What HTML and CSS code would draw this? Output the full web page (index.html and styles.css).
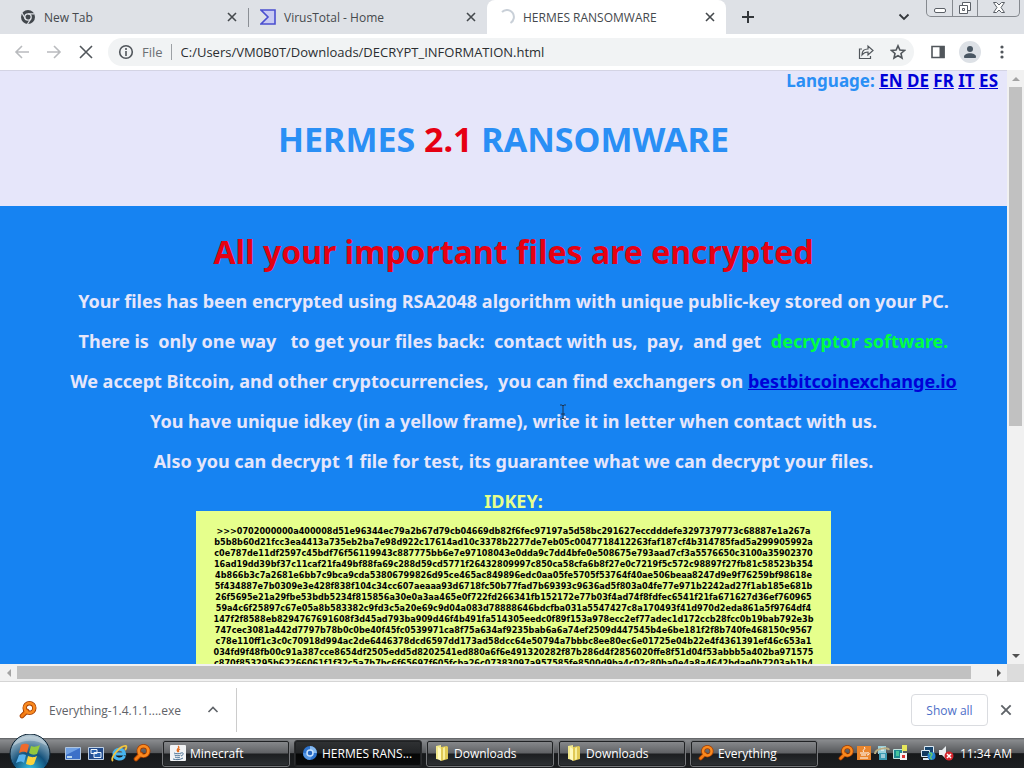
FILE: index.html
```
<!DOCTYPE html>
<html lang="en">
<head>
    <meta charset="UTF-8">
    <meta name="viewport" content="width=device-width, initial-scale=1.0">
    <title>HERMES RANSOMWARE</title>
    <link rel="stylesheet" href="styles.css">
</head>
<body>
    <!-- shared icons -->
    <svg class="sprite" aria-hidden="true">
        <symbol id="close" viewBox="0 0 12 12"><path d="M2 2l8 8M10 2l-8 8" fill="none" stroke="currentColor" stroke-width="1.6"/></symbol>
        <symbol id="magnifier" viewBox="0 0 18 18">
            <path d="M8 10l-5 5" stroke="#a33d00" stroke-width="4.600" stroke-linecap="round"/>
            <circle cx="10.500" cy="7" r="4.800" fill="none" stroke="#a33d00" stroke-width="4.400"/>
            <path d="M8 10l-5 5" stroke="#f47c14" stroke-width="3" stroke-linecap="round"/>
            <circle cx="10.500" cy="7" r="4.800" fill="none" stroke="#f98a20" stroke-width="2.800"/>
        </symbol>
        <symbol id="folder" viewBox="0 0 16 16">
            <path d="M2 1l5-1v15l-5-1z" fill="#f3e98c"/>
            <path d="M7 2l6-1 1 1v12l-7 2z" fill="#e0c955"/>
            <path d="M4 2l3 2v12l-3-2z" fill="#fff9bd"/>
            <path d="M9 3l2-1v12l-2 1z" fill="#f8ef9c"/>
        </symbol>
        <symbol id="cup" viewBox="0 0 16 16">
            <path d="M8 1c3 2-3 3 0 6M10 4c-2 1-2 2-1 3" fill="none" stroke="#e36b1d" stroke-width="1.300"/>
            <path d="M4 8c2 1 6 1 7 0M4.500 10c2 1 5 1 6 0M5 12c2 1 4 1 5 0M11 8c3-1 3 2 0 3M3 14c3 1 7 1 10-1" fill="none" stroke="#4c7396"/>
        </symbol>
    </svg>

    <header class="tabs">
        <div class="tab">
            <svg class="icon16" viewBox="0 0 16 16"><circle cx="8" cy="8" r="7" fill="#42474c"/><circle cx="8" cy="8" r="3.200" fill="none" stroke="#dee1e6" stroke-width="1.300"/><path d="M8 4.800h6.500M5.300 9.600L2 4M10.800 9.600L7.500 15" stroke="#dee1e6" stroke-width="1.200"/></svg>
            <span class="tab-title">New Tab</span>
            <button class="tab-close" aria-label="Close tab"><svg><use href="#close"/></svg></button>
        </div>
        <div class="tab divided">
            <svg class="icon16" viewBox="0 0 16 16"><path d="M1 1h14v14H1l7-7z" fill="#c9cbf3" stroke="#4b4fd0" stroke-width="1.600"/></svg>
            <span class="tab-title">VirusTotal - Home</span>
            <button class="tab-close" aria-label="Close tab"><svg><use href="#close"/></svg></button>
        </div>
        <div class="tab active">
            <svg class="icon16" viewBox="0 0 16 16"><path d="M3 3a7 7 0 1 1 8.500 11" fill="none" stroke="#c9d0d8" stroke-width="2"/></svg>
            <span class="tab-title">HERMES RANSOMWARE</span>
            <button class="tab-close" aria-label="Close tab"><svg><use href="#close"/></svg></button>
        </div>
        <button class="new-tab" aria-label="New tab"><svg viewBox="0 0 14 14"><path d="M7 1v12M1 7h12" stroke="#33373b" stroke-width="2"/></svg></button>
        <button class="tab-search" aria-label="Search tabs"><svg viewBox="0 0 12 12"><path d="M1.500 3.500L6 8l4.500-4.500" fill="none" stroke="#33373b" stroke-width="1.800"/></svg></button>
        <div class="window-buttons">
            <button aria-label="Minimize"><svg viewBox="0 0 16 16"><rect x="2.500" y="8.500" width="11" height="4" rx="1.500" fill="#fff" stroke="#5b6067"/></svg></button>
            <button aria-label="Restore"><svg viewBox="0 0 16 16"><path d="M5.500 2.500h8v8h-8z" fill="#fff" stroke="#5b6067"/><path d="M2.500 5.500h8v8h-8z" fill="#fff" stroke="#5b6067"/><path d="M5.500 8.500h2v2h-2z" fill="none" stroke="#5b6067"/></svg></button>
            <button class="wide" aria-label="Close"><svg viewBox="0 0 16 16"><path d="M2.500 2.500h3L8 5l2.500-2.500h3L10 7.500l3.500 5h-3L8 10l-2.500 2.500h-3L6 7.500z" fill="#fff" stroke="#5b6067"/></svg></button>
        </div>
    </header>

    <nav class="toolbar">
        <button class="faded" aria-label="Back"><svg viewBox="0 0 16 16"><path d="M15 8H2M8 2L2 8l6 6"/></svg></button>
        <button class="faded" aria-label="Forward"><svg viewBox="0 0 16 16"><path d="M1 8h13M8 2l6 6-6 6"/></svg></button>
        <button aria-label="Stop"><svg viewBox="0 0 16 16"><path d="M2 2l12 12M14 2L2 14"/></svg></button>
        <div class="address">
            <svg viewBox="0 0 16 16"><circle cx="8" cy="8" r="6.300"/><path d="M8 7v5M8 4v2"/></svg>
            <label for="url">File</label>
            <input type="text" id="url" value="C:/Users/VM0B0T/Downloads/DECRYPT_INFORMATION.html">
            <button aria-label="Share"><svg viewBox="0 0 16 16"><path class="thin" d="M4 5H1.500v9.500h11V12M4 11c0-4 2-6 6-6V2l5 4.500-5 4.500V8C7 8 5.500 9 4 11z"/></svg></button>
            <button aria-label="Bookmark"><svg viewBox="0 0 16 16"><path d="M8 1.800l1.900 4.200 4.500.5-3.400 3 1 4.500-4-2.400-4 2.400 1-4.500-3.400-3 4.500-.5z"/></svg></button>
        </div>
        <button aria-label="Side panel"><svg viewBox="0 0 16 16"><path d="M2 2.500h12v11H2z"/><path d="M9.500 2h5v12h-5z" fill="#51565b" stroke="none"/></svg></button>
        <button class="profile" aria-label="Profile"><svg viewBox="0 0 16 16"><circle cx="8" cy="5" r="3" fill="#4a5763" stroke="none"/><path d="M2 13c0-5 12-5 12 0v1H2z" fill="#4a5763" stroke="none"/></svg></button>
        <button aria-label="Menu"><svg viewBox="0 0 16 16"><g fill="#51565b" stroke="none"><circle cx="8" cy="3" r="1.600"/><circle cx="8" cy="8" r="1.600"/><circle cx="8" cy="13" r="1.600"/></g></svg></button>
    </nav>

    <div class="viewport">
        <main class="page">
            <div class="top">
                <div class="language">Language: <a href="#">EN</a> <a href="#">DE</a> <a href="#">FR</a> <a href="#">IT</a> <a href="#">ES</a></div>
                <h1>HERMES <span class="red">2.1</span> RANSOMWARE</h1>
            </div>
            <div class="note">
                <h2>All your important files are encrypted</h2>
                <p>Your files has been encrypted using RSA2048 algorithm with unique public-key stored on your PC.</p>
                <p>There is&nbsp; only one way&nbsp;&nbsp; to get your files back:&nbsp; contact with us,&nbsp; pay,&nbsp; and get&nbsp; <span class="green">decryptor software.</span></p>
                <p>We accept Bitcoin, and other cryptocurrencies,&nbsp; you can find exchangers on <a href="#">bestbitcoinexchange.io</a></p>
                <p>You have unique idkey (in a yellow frame), write it in letter when contact with us.</p>
                <p>Also you can decrypt 1 file for test, its guarantee what we can decrypt your files.</p>
                <div class="idkey-label">IDKEY:</div>
                <div class="idkey">&gt;&gt;&gt;0702000000a400008d51e96344ec79a2b67d79cb04669db82f6fec97197a5d58bc291627eccdddefe3297379773c68887e1a267a<br>
b5b8b60d21fcc3ea4413a735eb2ba7e98d922c17614ad10c3378b2277de7eb05c0047718412263faf187cf4b314785fad5a299905992a<br>
c0e787de11df2597c45bdf76f56119943c887775bb6e7e97108043e0dda9c7dd4bfe0e508675e793aad7cf3a5576650c3100a35902370<br>
16ad19dd39bf37c11caf21fa49bf88fa69c288d59cd5771f26432809997c850ca58cfa6b8f27e0c7219f5c572c98897f27fb81c58523b354<br>
4b866b3c7a2681e6bb7c9bca9cda53806799826d95ce465ac849896edc0aa05fe5705f53764f40ae506beaa8247d9e9f76259bf98618e<br>
5f434887e7b0309e3e428f838f104c34cc607aeaaa93d6718fc50b77fad7b69393c9636ad5f803a04fe77e971b2242ad27f1ab185e681b<br>
26f5695e21a29fbe53bdb5234f815856a30e0a3aa465e0f722fd266341fb152172e77b03f4ad74f8fdfec6541f21fa671627d36ef760965<br>
59a4c6f25897c67e05a8b583382c9fd3c5a20e69c9d04a083d78888646bdcfba031a5547427c8a170493f41d970d2eda861a5f9764df4<br>
147f2f8588eb8294767691608f3d45ad793ba909d46f4b491fa514305eedc0f89f153a978ecc2ef77adec1d172ccb28fcc0b19bab792e3b<br>
747cec3081a442d7797b78b0c0be40f45fc0539971ca8f75a634af9235bab6a6a74ef2509d447545b4e6be181f2f8b740fe468150c9567<br>
c78e110ff1c3c0c70918d994ac2de6446378dcd6597dd173ad58dcc64e50794a7bbbc8ee80ec6e01725e04b22e4f4361391ef46c653a1<br>
034fd9f48fb00c91a387cce8654df2505edd5d8202541ed880a6f6e491320282f87b286d4f2856020ffe8f51d04f53abbb5a402ba971575<br>
c870f853295b62266061f1f32c5a7b7bc6f65697f605fcba26c07383097a957585fe8500d9ba4c02c80ba0e4a8a4642bdae0b7203ab1b4</div>
            </div>
        </main>
        <div class="scroll-y"><span class="arrow up"></span><span class="thumb"></span><span class="arrow down"></span></div>
        <div class="scroll-x"><span class="arrow left"></span><span class="thumb"></span><span class="arrow right"></span></div>
        <div class="corner"></div>
        <svg class="cursor" viewBox="0 0 8 16"><path d="M1 1h2l1 1 1-1h2M4 2v12M1 15h2l1-1 1 1h2M2 10h4" fill="none" stroke="#1c3452"/></svg>
    </div>

    <section class="downloads">
        <div class="download">
            <svg class="icon18"><use href="#magnifier"/></svg>
            <span>Everything-1.4.1.1....exe</span>
            <button aria-label="Download options"><svg viewBox="0 0 12 12"><path d="M1.500 8L6 3.500 10.500 8" fill="none" stroke="#5f6368" stroke-width="1.600"/></svg></button>
        </div>
        <button class="show-all">Show all</button>
        <button class="close-bar" aria-label="Close downloads"><svg><use href="#close"/></svg></button>
    </section>

    <footer class="taskbar">
        <button class="start" aria-label="Start">
            <svg viewBox="0 0 42 34">
                <defs><radialGradient id="orb" cx="50%" cy="90%" r="85%"><stop offset="0" stop-color="#35c3e8"/><stop offset=".5" stop-color="#14527c"/><stop offset="1" stop-color="#a9bfcc"/></radialGradient></defs>
                <circle cx="21" cy="20" r="20" fill="url(#orb)" stroke="#0b2233"/>
                <path d="M12 11c4-2 6-1 8 0l-2 8c-3-2-5-1-8 0z" fill="#ee6a2c"/>
                <path d="M22 12c3 1 5 1 9-1l-3 9c-3 1-5 1-8-1z" fill="#93c83e"/>
                <path d="M10 21c3-1 5-1 7 0l-2 8c-2-2-5-2-8 0z" fill="#5ab2ec"/>
                <path d="M19 22c3 1 5 2 9 0l-3 8c-3 2-5 1-8 0z" fill="#fcd43c"/>
                <path d="M4 12C9-1 33-1 38 12 27 5 15 5 4 12z" fill="#fff" opacity=".3"/>
            </svg>
        </button>
        <div class="quick">
            <a href="#" aria-label="Show desktop"><svg class="icon18" viewBox="0 0 18 18"><path d="M1.500 3.500h15v12h-15z" fill="#3c70c8" stroke="#afc5df"/><path d="M2 4h14L2 11z" fill="#6fa0e4"/><path d="M3 12h5v2H3z" fill="#b8d8ee"/></svg></a>
            <a href="#" aria-label="Switch windows"><svg class="icon18" viewBox="0 0 18 18"><path d="M1.500 3.500h15v12h-15z" fill="#224b8b" stroke="#bdcfe4"/><path d="M4 5.500h6v4H4zM7 8.500h7v5H7z" fill="#2b62ad" stroke="#e8f1fb"/></svg></a>
            <a href="#" aria-label="Internet Explorer"><svg class="icon18" viewBox="0 0 18 18"><path d="M14.500 12c-2 4.500-10.500 4-10.500-2s9.500-6.500 10.500 0H5" fill="none" stroke="#48b5ef" stroke-width="3"/><path d="M3 17C-1 14 11 1 16 2c1 1 0 3-1 4" fill="none" stroke="#f2c53d" stroke-width="1.800"/></svg></a>
            <a href="#" aria-label="Everything"><svg class="icon18"><use href="#magnifier"/></svg></a>
        </div>
        <div class="tasks">
            <button><svg class="icon16" viewBox="0 0 16 16"><rect width="16" height="16" rx="1" fill="#f1f3f5"/><use href="#cup"/></svg><span>Minecraft</span></button>
            <button class="current"><svg class="icon16" viewBox="0 0 16 16"><circle cx="8" cy="8" r="7" fill="#2e74cf"/><path d="M8 1a7 7 0 0 1 7 7H8z" fill="#85b9f1"/><path d="M1 8a7 7 0 0 0 7 7l3-6z" fill="#5596e3"/><circle cx="8" cy="8" r="3" fill="#2364c0" stroke="#c6e0fb" stroke-width="1.500"/></svg><span>HERMES RANS...</span></button>
            <button><svg class="icon16"><use href="#folder"/></svg><span>Downloads</span></button>
            <button><svg class="icon16"><use href="#folder"/></svg><span>Downloads</span></button>
            <button><svg class="icon16"><use href="#magnifier"/></svg><span>Everything</span></button>
        </div>
        <div class="tray">
            <svg class="icon16"><use href="#magnifier"/></svg>
            <svg class="icon16" viewBox="0 0 16 16"><rect x="1" y="1" width="14" height="14" fill="#e9852d"/><path d="M8 2c3 2-3 3 0 5M4 8h7M5 10h5M11 8c3-1 3 2 0 2M4 13h8" fill="none" stroke="#fff"/></svg>
            <svg class="icon16" viewBox="0 0 16 16"><path d="M4 1h8v8H4z" fill="#9ad2de"/><path d="M5 8h8v7H5z" fill="#3d9bb4"/><path d="M7 3h3M7 5h3M7 10h4M7 12h4" stroke="#fff"/><path d="M1 9c0-6 13-7 14-4" fill="none" stroke="#b9ad83" stroke-width="2"/></svg>
            <svg class="icon16" viewBox="0 0 16 16"><path d="M1.500 4.500h9v9h-9z" fill="#1d8a90" stroke="#bfe3df"/><path d="M10 0h5v6h-5z" fill="#e6e65b"/><path d="M8 8h7v7H8z" fill="#f3f3f3"/><path d="M10 10h3v3h-3z" fill="#d33"/><path d="M4 6h3v5H4z" fill="#45c59d"/></svg>
            <svg class="icon16 network" viewBox="0 0 16 16"><path d="M4.500 1.500h9v7h-9z" fill="#17456e" stroke="#dceaf5"/><path d="M1.500 5.500h8v6h-8z" fill="#123a60" stroke="#dceaf5"/><path d="M3 14h6" stroke="#dceaf5" stroke-width="2"/><circle cx="11.500" cy="11" r="4" fill="#2483d2"/><path d="M9 9c2-2 4 0 2 2s1 3 1 3" fill="none" stroke="#62c66a" stroke-width="1.500"/></svg>
            <svg class="icon16" viewBox="0 0 16 16"><path d="M1 5h3l4-4v13l-4-4H1z" fill="#e9edf0"/><circle cx="11" cy="11" r="4.500" fill="#d4242c"/><path d="M9 9l4 4M13 9l-4 4" stroke="#fff" stroke-width="1.500"/></svg>
            <time>11:34 AM</time>
        </div>
    </footer>
</body>
</html>
```

FILE: styles.css
```
* {
    box-sizing: border-box;
}
body {
    margin: 0;
    height: 100vh;
    display: flex;
    flex-direction: column;
    overflow: hidden;
    font-family: "Open Sans", "Noto Sans", sans-serif;
    font-size: 12px;
    background: #fff;
}
button {
    display: flex;
    align-items: center;
    justify-content: center;
    padding: 0;
    border: 0;
    background: none;
    font: inherit;
    color: inherit;
}
svg {
    display: block;
    flex: none;
}
.sprite {
    position: absolute;
    width: 0;
    height: 0;
}
.icon16 {
    width: 16px;
    height: 16px;
}
.icon18 {
    width: 18px;
    height: 18px;
}

/* tab strip */
.tabs {
    display: flex;
    flex: none;
    height: 34px;
    background: #dee1e6;
    color: #45494d;
}
.tab {
    display: flex;
    align-items: center;
    flex: 0 1 239px;
    gap: 8px;
    padding: 0 10px 0 12px;
}
.tab:first-child {
    flex-basis: 248px;
    padding-left: 20px;
}
.tab-title {
    flex: 1;
    white-space: nowrap;
}
.tab-close svg {
    width: 12px;
    height: 12px;
}
.divided {
    background: linear-gradient(#8b8f95, #8b8f95) 0 8px / 1px 19px no-repeat;
}
.active {
    background: #fff;
    border-radius: 8px 8px 0 0;
}
.new-tab {
    width: 44px;
}
.new-tab svg {
    width: 14px;
    height: 14px;
}
.tab-search {
    margin-left: auto;
    width: 44px;
}
.tab-search svg {
    width: 12px;
    height: 12px;
}
.window-buttons {
    display: flex;
    height: 17px;
    margin-right: 4px;
    border: 1px solid #85898f;
    border-top: 0;
    border-radius: 0 0 5px 5px;
}
.window-buttons button {
    width: 25px;
}
.window-buttons button + button {
    border-left: 1px solid #85898f;
}
.window-buttons .wide {
    width: 42px;
}
.window-buttons svg {
    width: 16px;
    height: 16px;
}

/* address row */
.toolbar {
    display: flex;
    flex: none;
    align-items: center;
    height: 36px;
    padding: 0 6px;
    background: #fff;
}
.toolbar button {
    width: 32px;
    height: 28px;
}
.toolbar svg {
    width: 16px;
    height: 16px;
    fill: none;
    stroke: #51565b;
    stroke-width: 1.6;
}
.toolbar .thin {
    stroke-width: 1.2;
}
.toolbar .faded svg {
    stroke: #b9bbbe;
}
.address {
    display: flex;
    flex: 1;
    align-items: center;
    height: 28px;
    margin: 0 8px 0 6px;
    padding: 0 0 0 10px;
    border-radius: 14px;
    background: #f1f3f4;
}
.address label {
    margin-left: 8px;
    padding-right: 8px;
    border-right: 1px solid #9da1a5;
    font-size: 13px;
    line-height: 16px;
    color: #6b6f73;
}
.address input {
    flex: 1;
    min-width: 0;
    padding: 0 0 0 9px;
    border: 0;
    background: none;
    font: inherit;
    font-size: 13px;
    color: #2b2e31;
}
.toolbar .profile svg {
    width: 22px;
    height: 22px;
    padding: 3px;
    border-radius: 50%;
    background: #dde1e6;
}

/* page and its scrollbars */
.viewport {
    position: relative;
    display: grid;
    flex: 1;
    min-height: 0;
    grid-template: minmax(0, 1fr) 17px / minmax(0, 1fr) 17px;
    border-bottom: 1px solid #d5d5d5;
}
.page {
    display: flex;
    flex-direction: column;
    overflow: hidden;
    background: #e6e6fa;
    font-family: "Noto Sans", sans-serif;
    font-size: 18px;
    font-weight: bold;
    line-height: 20px;
    text-align: center;
}
.page a {
    color: #0000d8;
}
.top {
    flex: none;
    height: 136px;
    border-top: 1px solid #d4d4e4;
    color: #2a8ff5;
}
.language {
    padding-right: 9px;
    font-size: 17px;
    text-align: right;
}
h1, h2 {
    margin: 0;
    font-size: 32px;
    line-height: 40px;
}
h1 {
    margin-top: 28px;
    font-size: 34px;
}
.red, h2 {
    color: #e60012;
}
.green {
    color: #00ff40;
}
.note {
    flex: none;
    margin-right: -20px;
    padding-top: 26px;
    background: #1683f2;
    color: #e6e6fa;
}
.note p {
    margin: 0 0 20px;
    white-space: nowrap;
}
.note h2 {
    margin-bottom: 19px;
}
.idkey-label {
    color: #e6ff8c;
}
.idkey {
    width: 635px;
    margin: 0 auto;
    padding: 15px 16px;
    background: #e6ff8c;
    color: #000;
    font-family: "DejaVu Sans Condensed", "DejaVu Sans", sans-serif;
    font-size: 9px;
    line-height: 11px;
}
.scroll-y, .scroll-x {
    display: flex;
    align-items: center;
    background: #f1f1f1;
}
.scroll-y {
    flex-direction: column;
}
.scroll-y .thumb {
    width: 13px;
    height: 57%;
    background: #c1c1c1;
}
.scroll-y .down {
    margin-top: auto;
}
.scroll-x .thumb {
    flex: 0 1 954px;
    height: 13px;
    background: #c1c1c1;
}
.scroll-x .right {
    margin-left: auto;
}
.arrow {
    display: flex;
    flex: none;
    align-items: center;
    justify-content: center;
    width: 17px;
    height: 17px;
}
.arrow::before {
    content: "";
    border: 4px solid transparent;
}
.up::before {
    border-top-width: 0;
    border-bottom-color: #a3a3a3;
}
.down::before {
    border-bottom-width: 0;
    border-top-color: #505050;
}
.left::before {
    border-left-width: 0;
    border-right-color: #a3a3a3;
}
.right::before {
    border-right-width: 0;
    border-left-color: #505050;
}
.corner {
    background: #dcdcdc;
}
.cursor {
    position: absolute;
    left: 559px;
    top: 334px;
    width: 8px;
    height: 16px;
}

/* download shelf */
.downloads {
    display: flex;
    flex: none;
    align-items: center;
    height: 56px;
    padding-right: 10px;
    color: #5f6368;
}
.download {
    display: flex;
    align-items: center;
    height: 44px;
    width: 237px;
    padding-left: 19px;
    gap: 12px;
    border-right: 1px solid #ccc;
}
.download button {
    margin-left: 14px;
}
.download button svg {
    width: 12px;
    height: 12px;
}
.show-all {
    width: 77px;
    height: 32px;
    margin-left: auto;
    border: 1px solid #dadce0;
    border-radius: 4px;
    color: #4d6fc8;
}
.close-bar {
    width: 16px;
    margin-left: 10px;
}
.close-bar svg {
    width: 14px;
    height: 14px;
}

/* taskbar */
.taskbar {
    display: flex;
    flex: none;
    align-items: center;
    height: 30px;
    padding-right: 12px;
    background: linear-gradient(#5b5d60 0, #898b8e 2px, #55575a 50%, #16181a 52%, #1d1f21 100%);
    color: #fff;
}
.start {
    align-self: flex-end;
    width: 60px;
}
.start svg {
    width: 42px;
    height: 34px;
}
.quick {
    display: flex;
    gap: 5px;
    width: 102px;
    padding-left: 4px;
}
.tasks {
    display: flex;
    flex: 0 1 656px;
    gap: 4px;
    min-width: 0;
}
.tasks button {
    flex: 1;
    justify-content: flex-start;
    gap: 4px;
    height: 27px;
    padding-left: 7px;
    border: 1px solid #77797c;
    border-radius: 3px;
    outline: 1px solid #202224;
    outline-offset: -2px;
    background: linear-gradient(#898b8e, #606265 48%, #1c1e20 52%, #2e3134);
    white-space: nowrap;
}
.tasks .current {
    border-color: #2b2c2e;
    background: linear-gradient(#303234, #222426 48%, #050606 52%, #0c0d0e);
}
.tray {
    display: flex;
    align-items: center;
    gap: 2px;
    margin-left: auto;
    white-space: nowrap;
}
.network {
    margin-left: 10px;
}
.tray time {
    margin-left: 4px;
}
```
